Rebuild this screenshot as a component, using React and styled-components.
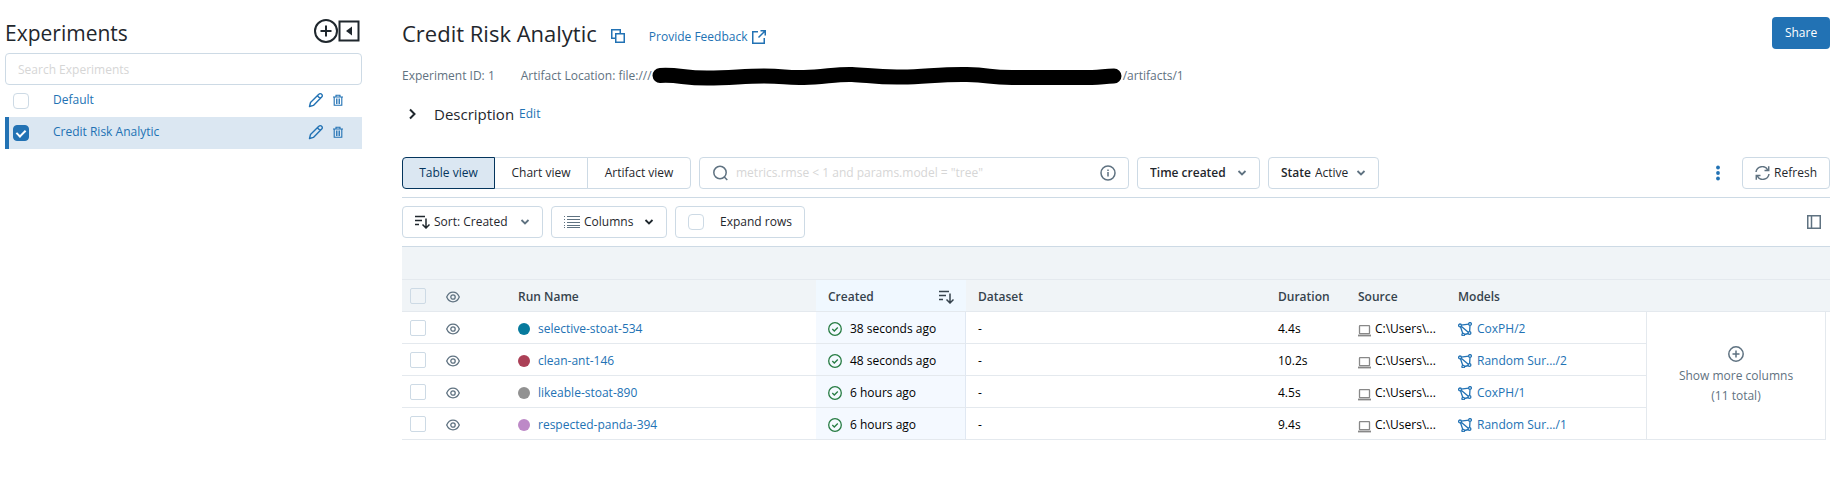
import React from "react";
import styled, { createGlobalStyle, css } from "styled-components";

const color = {
  text: "#1f272d",
  muted: "#5f7281",
  border: "#cddae5",
  rule: "#e4e9ee",
  primary: "#2272b4",
  selected: "#dbe7f2",
  header: "#f0f4f7",
};

const Global = createGlobalStyle`
  *, *::before, *::after { box-sizing: border-box; }
  body { margin: 0; background: #fff; }
  body, button, input, select {
    font-family: "Open Sans", "Noto Sans", sans-serif;
    font-size: 12px;
    line-height: 20px;
    color: ${color.text};
  }
  button { cursor: pointer; }
  svg { flex: none; }
`;

const Page = styled.div`
  display: flex;
  gap: 40px;
  padding: 0 8px 36px 5px;
`;

const Sidebar = styled.aside`
  flex: 0 0 357px;
`;

const SidebarHead = styled.div`
  display: flex;
  align-items: center;
  justify-content: space-between;
  height: 53px;
  padding: 12px 1px 0 0;
`;

const Heading = styled.h1`
  margin: 0;
  font-size: 22px;
  line-height: 28px;
  font-weight: 500;
`;

const SidebarHeading = styled.h2`
  margin: 0;
  font-size: 21px;
  line-height: 28px;
  font-weight: 500;
`;

const HeadActions = styled.div`
  display: flex;
  align-items: center;
  padding: 0 1px 4px 0;
`;

const IconButton = styled.button`
  display: inline-flex;
  align-items: center;
  justify-content: center;
  padding: 0;
  border: 0;
  background: none;
  vertical-align: middle;
  color: ${(p) => p.$color || color.primary};
`;

const SearchExperiments = styled.input`
  display: block;
  width: 100%;
  height: 32px;
  padding: 0 12px;
  border: 1px solid ${color.border};
  border-radius: 4px;
  &::placeholder { color: #d6d6d6; opacity: 1; }
`;

const ExperimentList = styled.ul`
  margin: 0;
  padding: 0;
  list-style: none;
`;

const ExperimentRow = styled.li`
  display: flex;
  align-items: center;
  height: 32px;
  padding-right: 18px;
  border-left: 4px solid ${(p) => (p.$active ? color.primary : "transparent")};
  background: ${(p) => (p.$active ? color.selected : "transparent")};
`;

const Link = styled.a`
  color: ${color.primary};
  text-decoration: none;
`;

const ExperimentLink = styled(Link)`
  flex: 1;
  padding: 0 0 2px 24px;
`;

const RowActions = styled.div`
  display: flex;
  align-items: center;
  gap: 8px;
  padding-bottom: 2px;
`;

const Checkbox = styled.input.attrs({ type: "checkbox" })`
  appearance: none;
  display: block;
  position: relative;
  flex: none;
  width: 16px;
  height: 16px;
  margin: 0;
  border: 1px solid ${color.border};
  border-radius: ${(p) => (p.$square ? 2 : 4)}px;
  ${(p) => p.$inset && css`margin-left: 4px;`}
  &:checked {
    background: ${color.primary};
    border-color: ${color.primary};
  }
  &:checked::after {
    content: "";
    position: absolute;
    left: 4px;
    top: 2px;
    width: 6px;
    height: 9px;
    border: solid #fff;
    border-width: 0 2px 2px 0;
    transform: rotate(45deg);
  }
`;

const Main = styled.main`
  flex: 1;
  min-width: 0;
`;

const TitleBar = styled.header`
  display: flex;
  align-items: center;
  padding-top: 17px;
`;

const Feedback = styled(Link)`
  display: inline-flex;
  align-items: center;
  gap: 5px;
  margin: 8px 0 0 24px;
`;

const CopyButton = styled(IconButton)`
  margin: 6px 0 0 14px;
`;

const ShareButton = styled.button`
  width: 58px;
  height: 32px;
  margin-left: auto;
  padding: 0;
  border: 0;
  border-radius: 4px;
  background: ${color.primary};
  color: #fff;
`;

const Meta = styled.div`
  display: flex;
  align-items: center;
  gap: 26px;
  height: 20px;
  margin-top: 17px;
  color: ${color.muted};
`;

const Location = styled.span`
  display: flex;
  align-items: center;
  white-space: nowrap;
`;

const Description = styled.div`
  display: flex;
  align-items: center;
  height: 20px;
  margin: 18px 0 33px;
  padding-left: 4px;
`;

const DescriptionTitle = styled.h2`
  margin: 0 5px 0 16px;
  font-size: 15px;
  line-height: 20px;
  font-weight: 400;
`;

const Toolbar = styled.div`
  display: flex;
  align-items: center;
  gap: 8px;
  padding-bottom: 8px;
  margin-bottom: ${(p) => (p.$last ? 0 : 8)}px;
  border-bottom: 1px solid ${color.border};
`;

const Segments = styled.div`
  display: flex;
`;

const Segment = styled.button`
  width: ${(p) => p.$width}px;
  height: 32px;
  margin-left: -1px;
  padding: 0;
  border: 1px solid ${color.border};
  background: #fff;
  &:first-child { border-radius: 4px 0 0 4px; margin-left: 0; }
  &:last-child { border-radius: 0 4px 4px 0; }
  ${(p) => p.$active && css`
    z-index: 1;
    border-color: #04355d;
    background: ${color.selected};
    color: #04355d;
  `}
`;

const field = css`
  display: inline-flex;
  align-items: center;
  width: ${(p) => p.$width}px;
  height: 32px;
  padding: 0 12px;
  border: 1px solid ${color.border};
  border-radius: 4px;
  background: #fff;
  color: ${color.text};
  white-space: nowrap;
`;

const SearchBox = styled.label`
  ${field}
  gap: 8px;
  color: ${color.muted};
`;

const SearchInput = styled.input`
  flex: 1;
  min-width: 0;
  padding: 0;
  border: 0;
  outline: 0;
  background: none;
  &::placeholder { color: #d6d6d6; opacity: 1; }
`;

const Field = styled.label`
  ${field}
  gap: ${(p) => p.$gap || 4}px;
  & > svg:last-child { margin-left: auto; color: ${color.muted}; }
`;

const FieldButton = styled.button`
  ${field}
  gap: 4px;
  & > svg:first-child { color: ${color.muted}; }
  & > svg:last-child { margin-left: auto; }
`;

const Select = styled.select`
  appearance: none;
  padding: 0;
  border: 0;
  outline: 0;
  background: none;
  font-weight: ${(p) => (p.$strong ? 600 : 400)};
`;

const Strong = styled.span`
  font-weight: 600;
`;

const ToolbarEnd = styled.div`
  display: flex;
  align-items: center;
  gap: 16px;
  margin-left: auto;
  padding-right: ${(p) => p.$inset || 0}px;
`;

const RunsTable = styled.table`
  width: 100%;
  table-layout: fixed;
  border-collapse: separate;
  border-spacing: 0;
`;

const Col = styled.col`
  width: ${(p) => (p.$width ? p.$width + "px" : "auto")};
`;

const GroupCell = styled.th`
  height: 33px;
  padding: 0;
  background: ${color.header};
  border-bottom: 1px solid ${color.rule};
`;

const HeadCell = styled.th`
  height: 32px;
  padding: 2px 12px 0;
  text-align: left;
  font-weight: 600;
  color: #36434d;
  background: ${(p) => (p.$sorted ? "#f0f8ff" : color.header)};
  border-bottom: 1px solid ${color.rule};
  ${(p) => p.$tight && css`padding: 1px 8px 0;`}
`;

const Cell = styled.td`
  height: 32px;
  padding: 2px 12px 0;
  white-space: nowrap;
  color: #000;
  border-bottom: 1px solid ${color.rule};
  ${(p) => p.$tight && css`padding: 1px 8px 0;`}
  ${(p) => p.$sorted && css`
    background: #f4f9ff;
    border-right: 1px solid #e0e8f2;
  `}
`;

const CellLine = styled.div`
  display: flex;
  align-items: center;
  gap: ${(p) => p.$gap || 8}px;
  ${(p) => p.$spread && css`justify-content: space-between;`}
`;

const ModelLink = styled(Link)`
  display: flex;
  align-items: center;
  gap: 5px;
`;

const Dot = styled.span`
  width: 12px;
  height: 12px;
  border-radius: 50%;
  background: ${(p) => p.$color};
`;

const MoreCell = styled.td`
  padding: 0;
  border: solid ${color.rule};
  border-width: 0 1px 1px 1px;
`;

const MoreButton = styled.button`
  display: flex;
  flex-direction: column;
  align-items: center;
  width: 100%;
  padding: 0;
  border: 0;
  background: none;
  color: ${color.muted};
  & > svg { margin-bottom: 4px; }
`;

const Svg = ({ w = 16, h = w, box = `0 0 ${w} ${h}`, sw = 1.5, children, ...rest }) => (
  <svg width={w} height={h} viewBox={box} fill="none" stroke="currentColor" strokeWidth={sw} aria-hidden="true" {...rest}>
    {children}
  </svg>
);

const PlusCircleLarge = () => (
  <Svg w={24} sw={2}>
    <circle cx="12" cy="12" r="11" />
    <path d="M12 6.5v11M6.5 12h11" />
  </Svg>
);
const CollapseIcon = () => (
  <Svg w={22} sw={2}>
    <rect x="1.5" y="1.5" width="19" height="19" />
    <path d="M14 6.500v9L8 11z" fill="currentColor" stroke="none" />
  </Svg>
);
const PencilIcon = () => (
  <Svg w={16} sw={1.4}>
    <path d="M1.500 14.500l1-4L10.800 2.200a2 2 0 0 1 2.900 0 2 2 0 0 1 0 2.900L5.400 13.400zM9.300 3.700l2.900 2.900" strokeLinejoin="round" />
  </Svg>
);
const TrashIcon = () => (
  <Svg w={12} sw={1.1}>
    <path d="M1 3h10M4 3V1.200h4V3M2.200 3v8.300h7.600V3" />
    <path d="M4.500 4.500v5.500M6 4.500v5.500M7.500 4.500v5.500" strokeWidth=".9" />
  </Svg>
);
const CopyIcon = () => (
  <Svg w={14}>
    <path d="M4.750 9.250h-4V.750h8.500v4" />
    <rect x="4.750" y="4.750" width="8.500" height="8.500" />
  </Svg>
);
const ExternalIcon = () => (
  <Svg w={14}>
    <path d="M6 1.750H.750v11.500h11.500V8M8.500.750h4.750V5.500M13 1L6.500 7.500" />
  </Svg>
);
const ChevronRight = () => (
  <Svg w={12} sw={2}>
    <path d="M4 1.500L8.500 6 4 10.500" />
  </Svg>
);
const ChevronDown = () => (
  <Svg w={10} sw={1.8}>
    <path d="M1.500 3L5 6.500 8.500 3" />
  </Svg>
);
const SearchIcon = () => (
  <Svg w={16}>
    <circle cx="8" cy="7.500" r="6.200" />
    <path d="M12.300 12l3 3" />
  </Svg>
);
const InfoIcon = () => (
  <Svg w={16}>
    <circle cx="8" cy="8" r="7" />
    <path d="M8 7v4.500M8 4.500V6" />
  </Svg>
);
const SortIcon = () => (
  <Svg w={15} h={14}>
    <path d="M0 1.500h10M0 5.500h7M0 9.500h4M11 3.500v9M7.500 9.500l3.500 3.500 3.500-3.500" />
  </Svg>
);
const ListIcon = () => (
  <Svg w={16} h={14} sw={1}>
    <path d="M3 1.500h13M3 4.500h13M3 7.500h13M3 10.500h13M3 12.500h13M0 1.500h1M0 4.500h1M0 7.500h1M0 10.500h1M0 12.500h1" />
  </Svg>
);
const RefreshIcon = () => (
  <Svg w={15} h={14}>
    <path d="M1 6a6.300 6.300 0 0 1 11.800-2M14 8a6.300 6.300 0 0 1-11.800 2M13.700.300v4.200H9.500M1.300 13.700V9.500h4.200" />
  </Svg>
);
const DotsIcon = () => (
  <Svg w={16} fill="currentColor" stroke="none">
    <circle cx="8" cy="2.500" r="1.900" />
    <circle cx="8" cy="8" r="1.900" />
    <circle cx="8" cy="13.500" r="1.900" />
  </Svg>
);
const PanelIcon = () => (
  <Svg w={14}>
    <rect x=".75" y=".75" width="12.500" height="12.500" />
    <path d="M4.500 1v12" />
  </Svg>
);
const EyeIcon = () => (
  <Svg w={14} h={12} sw={1.3}>
    <path d="M.7 6C2 3 4.300 1.200 7 1.200S12 3 13.300 6C12 9 9.700 10.800 7 10.800S2 9 .7 6z" />
    <circle cx="7" cy="6" r="2.200" />
  </Svg>
);
const CheckCircle = () => (
  <Svg w={14} sw={1.3} color="#277c43">
    <circle cx="7" cy="7" r="6.300" />
    <path d="M4.300 7l2 2 3.500-3.500" />
  </Svg>
);
const LaptopIcon = () => (
  <Svg w={13} h={16} sw={1.3} color="#888">
    <rect x="1.500" y="4.700" width="10" height="8" rx=".5" />
    <path d="M0 14.500h13" strokeWidth="1.800" />
  </Svg>
);
const ModelIcon = () => (
  <Svg w={14} sw={1.3}>
    <path d="M3 3.200l7.800-1.100M12 3.400l-.4 6.500M10.500 11.500l-4 1M4.800 11.500L2.500 4.700M3.200 4.200l7.400 6.200" />
    <g fill="#fff">
      <circle cx="2" cy="3.400" r="1.400" />
      <circle cx="12" cy="2" r="1.400" />
      <circle cx="11.500" cy="11" r="1.400" />
      <circle cx="5.200" cy="12.600" r="1.300" />
    </g>
  </Svg>
);
const PlusCircle = () => (
  <Svg w={16}>
    <circle cx="8" cy="8" r="7.200" />
    <path d="M8 4.500v7M4.500 8h7" />
  </Svg>
);

const Redaction = () => (
  <svg width="471" height="20" viewBox="0 0 471 20" role="img" aria-label="Hidden path">
    <path
      d="M8 9.500C28 8.500 30 12 55 12S90 10 112 10s20 2 40 1.500S185 8 200 8.500s25 3 50 2.500 40-3 65-2.500 20 3 45 3 70 0 80 0 12-1.500 22-1.500"
      fill="none"
      stroke="#000"
      strokeWidth="15"
      strokeLinecap="round"
    />
  </svg>
);

const experiments = [
  { name: "Default", active: false },
  { name: "Credit Risk Analytic", active: true },
];

const runs = [
  { name: "selective-stoat-534", dot: "#077a9d", created: "38 seconds ago", duration: "4.4s", model: "CoxPH/2" },
  { name: "clean-ant-146", dot: "#ab4057", created: "48 seconds ago", duration: "10.2s", model: "Random Sur.../2" },
  { name: "likeable-stoat-890", dot: "#919191", created: "6 hours ago", duration: "4.5s", model: "CoxPH/1" },
  { name: "respected-panda-394", dot: "#bd89c7", created: "6 hours ago", duration: "9.4s", model: "Random Sur.../1" },
];

export default function App() {
  return (
    <>
      <Global />
      <Page>
        <Sidebar>
          <SidebarHead>
            <SidebarHeading>Experiments</SidebarHeading>
            <HeadActions>
              <IconButton $color={color.text} aria-label="New experiment"><PlusCircleLarge /></IconButton>
              <IconButton $color={color.text} aria-label="Collapse sidebar"><CollapseIcon /></IconButton>
            </HeadActions>
          </SidebarHead>
          <SearchExperiments placeholder="Search Experiments" aria-label="Search Experiments" />
          <ExperimentList>
            {experiments.map((e) => (
              <ExperimentRow key={e.name} $active={e.active}>
                <Checkbox $inset defaultChecked={e.active} aria-label={e.name} />
                <ExperimentLink href="#">{e.name}</ExperimentLink>
                <RowActions>
                  <IconButton aria-label={`Rename ${e.name}`}><PencilIcon /></IconButton>
                  <IconButton aria-label={`Delete ${e.name}`}><TrashIcon /></IconButton>
                </RowActions>
              </ExperimentRow>
            ))}
          </ExperimentList>
        </Sidebar>

        <Main>
          <TitleBar>
            <Heading>Credit Risk Analytic</Heading>
            <CopyButton aria-label="Copy name"><CopyIcon /></CopyButton>
            <Feedback href="#">Provide Feedback <ExternalIcon /></Feedback>
            <ShareButton>Share</ShareButton>
          </TitleBar>

          <Meta>
            <span>Experiment ID: 1</span>
            <Location>Artifact Location: file:///<Redaction />/artifacts/1</Location>
          </Meta>

          <Description>
            <IconButton $color={color.text} aria-label="Expand description"><ChevronRight /></IconButton>
            <DescriptionTitle>Description</DescriptionTitle>
            <Link href="#">Edit</Link>
          </Description>

          <Toolbar>
            <Segments>
              <Segment $width={93} $active>Table view</Segment>
              <Segment $width={94}>Chart view</Segment>
              <Segment $width={104}>Artifact view</Segment>
            </Segments>
            <SearchBox $width={430}>
              <SearchIcon />
              <SearchInput placeholder={'metrics.rmse < 1 and params.model = "tree"'} aria-label="Search runs" />
              <InfoIcon />
            </SearchBox>
            <Field $width={123}>
              <Select $strong aria-label="Time created"><option>Time created</option></Select>
              <ChevronDown />
            </Field>
            <Field $width={111}>
              <Strong>State</Strong>
              <Select><option>Active</option></Select>
              <ChevronDown />
            </Field>
            <ToolbarEnd>
              <IconButton aria-label="More actions"><DotsIcon /></IconButton>
              <FieldButton $width={88}><RefreshIcon />Refresh</FieldButton>
            </ToolbarEnd>
          </Toolbar>

          <Toolbar $last>
            <Field $width={141}>
              <SortIcon />
              <Select aria-label="Sort"><option>Sort: Created</option></Select>
              <ChevronDown />
            </Field>
            <FieldButton $width={116} aria-haspopup="true"><ListIcon />Columns<ChevronDown /></FieldButton>
            <Field $width={130} $gap={16}>
              <Checkbox />
              Expand rows
            </Field>
            <ToolbarEnd $inset={9}>
              <IconButton $color={color.muted} aria-label="Toggle preview"><PanelIcon /></IconButton>
            </ToolbarEnd>
          </Toolbar>

          <RunsTable>
            <colgroup>
              <Col $width={32} />
              <Col $width={72} />
              <Col $width={310} />
              <Col $width={150} />
              <Col />
              <Col $width={80} />
              <Col $width={100} />
              <Col $width={200} />
              <Col $width={180} />
              <Col $width={4} />
            </colgroup>
            <thead>
              <tr><GroupCell colSpan={10} /></tr>
              <tr>
                <HeadCell $tight><Checkbox $square aria-label="Select all runs" /></HeadCell>
                <HeadCell>
                  <CellLine><IconButton $color={color.muted} aria-label="Toggle all runs"><EyeIcon /></IconButton></CellLine>
                </HeadCell>
                <HeadCell>Run Name</HeadCell>
                <HeadCell $sorted><CellLine $spread>Created<SortIcon /></CellLine></HeadCell>
                <HeadCell>Dataset</HeadCell>
                <HeadCell>Duration</HeadCell>
                <HeadCell>Source</HeadCell>
                <HeadCell colSpan={3}>Models</HeadCell>
              </tr>
            </thead>
            <tbody>
              {runs.map((r, i) => (
                <tr key={r.name}>
                  <Cell $tight><Checkbox $square aria-label={`Select ${r.name}`} /></Cell>
                  <Cell>
                    <CellLine><IconButton $color={color.muted} aria-label={`Toggle ${r.name}`}><EyeIcon /></IconButton></CellLine>
                  </Cell>
                  <Cell><CellLine><Dot $color={r.dot} /><Link href="#">{r.name}</Link></CellLine></Cell>
                  <Cell $sorted><CellLine><CheckCircle />{r.created}</CellLine></Cell>
                  <Cell>-</Cell>
                  <Cell>{r.duration}</Cell>
                  <Cell><CellLine $gap={4}><LaptopIcon />C:\Users\...</CellLine></Cell>
                  <Cell><ModelLink href="#"><ModelIcon />{r.model}</ModelLink></Cell>
                  {i === 0 && (
                    <MoreCell rowSpan={4}>
                      <MoreButton>
                        <PlusCircle />
                        <span>Show more columns</span>
                        <span>(11 total)</span>
                      </MoreButton>
                    </MoreCell>
                  )}
                </tr>
              ))}
            </tbody>
          </RunsTable>
        </Main>
      </Page>
    </>
  );
}
